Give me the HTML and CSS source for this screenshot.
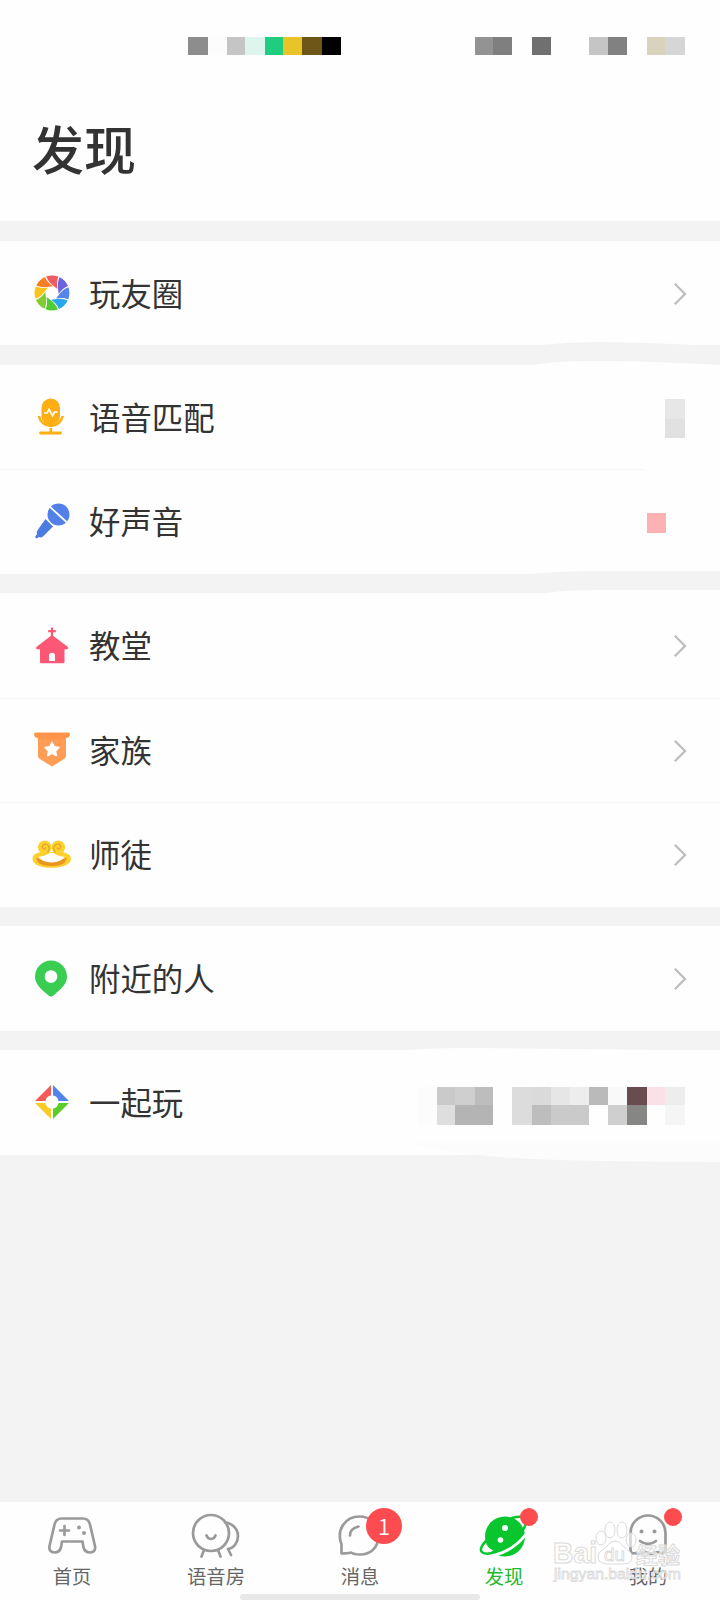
FILE: index.html
```html
<!DOCTYPE html>
<html lang="zh-CN">
<head>
<meta charset="utf-8">
<title>发现</title>
<link rel="stylesheet" href="styles.css">
</head>
<body>
<svg class="defs" aria-hidden="true">
  <symbol id="chevron" viewBox="0 0 14 24"><path d="M1.800 1.800 12 12 1.800 22.200" fill="none" stroke="#bebebe" stroke-width="2.300"/></symbol>
  <path id="blade" d="M-5.800-16.400Q.3-18.600 6.400-16.200 4-11 5.500-4L2.200-6.600Q-3.600-10.600-5.800-16.400Z"/>
</svg>
<div class="screen">
  <header class="header">
    <svg class="status" viewBox="0 0 720 20" shape-rendering="crispEdges">
      <path fill="#8d8d8d" d="M188 1h20v18h-20z"/><path fill="#fcfcfc" d="M208 1h19v18h-19z"/>
      <path fill="#c5c5c5" d="M227 1h18v18h-18z"/><path fill="#def5ed" d="M245 1h20v18h-20z"/>
      <path fill="#1fcd81" d="M265 1h18v18h-18z"/><path fill="#e8c428" d="M283 1h19v18h-19z"/>
      <path fill="#6e5518" d="M302 1h20v18h-20z"/><path d="M322 1h19v18h-19z"/>
      <path fill="#939393" d="M475 1h18v18h-18z"/><path fill="#7f7f7f" d="M493 1h19v18h-19z"/>
      <path fill="#707070" d="M532 1h19v18h-19z"/><path fill="#c5c5c5" d="M589 1h19v18h-19z"/>
      <path fill="#818181" d="M608 1h19v18h-19z"/><path fill="#d9d2bd" d="M647 1h18v18h-18z"/>
      <path fill="#d6d6d6" d="M665 1h20v18h-20z"/>
    </svg>
    <h1 class="title">发现</h1>
  </header>

  <main class="groups">
    <section class="group">
      <div class="row">
        <svg class="icon" viewBox="-20 -20 40 40">
          <use href="#blade" fill="#f15b5e"/><use href="#blade" fill="#6c63e0" transform="rotate(45)"/>
          <use href="#blade" fill="#5584ea" transform="rotate(90)"/><use href="#blade" fill="#2aa6ee" transform="rotate(135)"/>
          <use href="#blade" fill="#53cb35" transform="rotate(180)"/><use href="#blade" fill="#82cb30" transform="rotate(225)"/>
          <use href="#blade" fill="#f9c51b" transform="rotate(270)"/><use href="#blade" fill="#f67f25" transform="rotate(315)"/>
        </svg>
        <span class="label">玩友圈</span>
        <svg class="chevron"><use href="#chevron"/></svg>
      </div>
    </section>

    <section class="group">
      <div class="row">
        <svg class="icon" viewBox="0 0 40 40">
          <rect x="9.500" y="1.500" width="18.500" height="27" rx="9.200" fill="#ffae13"/>
          <path d="M12 16h3l2-3.500 3.500 6 2-3.500h3" fill="none" stroke="#fff" stroke-width="1.700"/>
          <path d="M7 19v.5a12 12 0 0 0 23.500 0V19M18.800 31v4" fill="none" stroke="#ffae13" stroke-width="2.500"/>
          <path d="M8.500 36h20" stroke="#ffae13" stroke-width="2.800" stroke-linecap="round"/>
        </svg>
        <span class="label">语音匹配</span>
        <svg class="mosaic-a" viewBox="0 0 20 40" shape-rendering="crispEdges"><path fill="#e7e7e7" d="M0 0h20v20H0z"/><path fill="#e1e1e1" d="M0 20h20v19H0z"/></svg>
      </div>
      <div class="row">
        <svg class="icon" viewBox="0 0 40 40">
          <circle cx="26.500" cy="13.500" r="11" fill="#5380e8"/>
          <path d="M17 5 34.500 21" stroke="#fff" stroke-width="1.700"/>
          <path d="m13.500 18 7.500 7.500-10 10q-2 1.500-4 .5L4.500 37.500 3 36l2-3q-.6-2.500 1-4.500Z" fill="#4c7ce1"/>
        </svg>
        <span class="label">好声音</span>
        <span class="mosaic-b"></span>
      </div>
    </section>

    <section class="group">
      <div class="row">
        <svg class="icon" viewBox="0 0 40 40">
          <path d="M20 2.500v10M16.200 6.200h7.600" stroke="#fc5876" stroke-width="2.200"/>
          <path d="M20 10 36 22q1 1.800-.8 2.200H32.500v13q0 1-1 1H9q-1 0-1-1v-13H5q-1.600-.3-.7-2.200Z" fill="#fc5876"/>
          <path d="M17 36v-5.200a3 3 0 0 1 6 0v5.200z" fill="#fff"/>
        </svg>
        <span class="label">教堂</span>
        <svg class="chevron"><use href="#chevron"/></svg>
      </div>
      <div class="row">
        <svg class="icon" viewBox="0 0 40 40">
          <path d="M6 5h28v21q0 1.700-1.500 2.800L20 36.500 7.500 28.800Q6 27.700 6 26z" fill="#ff9d57"/>
          <path d="M4 2.500h32q2 0 2 1.700Q38 7.500 34 8v1.500H6V8Q2 7.500 2 4.200q0-1.700 2-1.700Z" fill="#ff944b"/>
          <path d="m20 12.500 2.300 4.300 4.700.7-3.500 3.400.8 4.700-4.300-2.200-4.300 2.200.8-4.700-3.500-3.400 4.700-.7z" fill="#fff" stroke="#fff" stroke-width="1.500" stroke-linejoin="round"/>
        </svg>
        <span class="label">家族</span>
        <svg class="chevron"><use href="#chevron"/></svg>
      </div>
      <div class="row">
        <svg class="icon" viewBox="0 0 40 40">
          <path d="M7 18.500Q.5 20 .5 24.500C.5 31 9 33.800 19.500 33.800S39 31 39 24.500q0-4.500-7-6L24 16l-4.500 2.500L15 16Z" fill="#fbd02f"/>
          <path d="M4.500 23.500Q4.500 32 19.500 32t15-8.500Q29 27 19.500 27t-15-3.500Z" fill="#eb941f"/>
          <path d="M6.500 22.800Q14 22 17.500 19h4Q25 22 32.500 22.800 29 28.500 19.500 28.500T6.500 22.800Z" fill="#fff"/>
          <circle cx="12.700" cy="13.300" r="6.700" fill="#fbd02f"/><circle cx="26.300" cy="13.300" r="6.700" fill="#fbd02f"/>
          <path d="M15.500 18.300q3-4 .8-6.800-2.500-2.500-5.300-.5-1.500 2.300.5 4 2 .7 2.200-1.500M23.500 18.300q-3-4-.8-6.800 2.500-2.500 5.300-.5 1.500 2.300-.5 4-2 .7-2.200-1.500" fill="none" stroke="#e3a722" stroke-width="1.300"/>
        </svg>
        <span class="label">师徒</span>
        <svg class="chevron"><use href="#chevron"/></svg>
      </div>
    </section>

    <section class="group">
      <div class="row">
        <svg class="icon" viewBox="0 0 40 40">
          <path fill="#39ce52" fill-rule="evenodd" d="M19 2.500A16 16 0 0 1 35 18.500c0 7.500-5 11.500-13.500 19q-2.500 2-5 0C8 30 3 26 3 18.500A16 16 0 0 1 19 2.500Zm0 9.700a6.300 6.300 0 1 0 .01 0Z"/>
        </svg>
        <span class="label">附近的人</span>
        <svg class="chevron"><use href="#chevron"/></svg>
      </div>
    </section>

    <section class="group">
      <div class="row">
        <svg class="icon" viewBox="-20 -20 40 40">
          <path fill="#f35b58" d="M-1-17V-6.500A6.500 6.500 0 0 0-6.500-1H-17Z"/>
          <path fill="#5282eb" d="M1-17V-6.500A6.500 6.500 0 0 1 6.500-1H17Z"/>
          <path fill="#facb25" d="M-1 17V6.500A6.500 6.500 0 0 1-6.500 1H-17Z"/>
          <path fill="#5bcc29" d="M1 17V6.500A6.500 6.500 0 0 0 6.500 1H17Z"/>
        </svg>
        <span class="label">一起玩</span>
        <svg class="mosaic-c" viewBox="0 0 267 38" shape-rendering="crispEdges">
          <path fill="#fcfcfc" d="M0 0h19v38H0z"/>
          <path fill="#cacaca" d="M19 0h18v18H19z"/><path fill="#cfcfcf" d="M37 0h20v18H37z"/><path fill="#bdbdbd" d="M57 0h18v18H57z"/>
          <path fill="#dedede" d="M19 18h18v20H19z"/><path fill="#b4b4b4" d="M37 18h38v20H37z"/>
          <path fill="#dcdcdc" d="M94 0h20v38H94z"/><path fill="#dadada" d="M114 0h19v18h-19z"/><path fill="#e6e6e6" d="M133 0h19v18h-19z"/>
          <path fill="#ededed" d="M152 0h19v18h-19z"/><path fill="#bababa" d="M171 0h19v18h-19z"/><path fill="#f9f9f9" d="M190 0h19v18h-19z"/>
          <path fill="#694c50" d="M209 0h20v18h-20z"/><path fill="#fae0e7" d="M229 0h18v18h-18z"/><path fill="#ededed" d="M247 0h20v18h-20z"/>
          <path fill="#bdbdbd" d="M114 18h19v20h-19z"/><path fill="#cacaca" d="M133 18h38v20h-38z"/><path fill="#cfcfcf" d="M190 18h19v20h-19z"/>
          <path fill="#868784" d="M209 18h20v20h-20z"/><path fill="#f5f5f5" d="M247 18h20v20h-20z"/>
        </svg>
      </div>
    </section>
  </main>

  <svg class="smudges" viewBox="0 0 720 1600" aria-hidden="true">
    <path fill="#f3f3f3" d="M530 346Q570 342 600 342T720 346Z"/>
    <path fill="#fefefe" d="M535 365Q555 361 600 361T720 365Z"/>
    <path fill="#f3f3f3" d="M530 574Q560 571 600 571H720v3Z"/>
    <path fill="#fefefe" d="M540 594Q560 590 600 590H720v4Z"/>
    <path fill="#fefefe" d="M390 1052Q420 1048 470 1048T720 1051Z"/>
    <path fill="#fcfcfc" d="M410 1143H720V1162Q560 1162 500 1157T410 1143Z"/>
    <path fill="#fefefe" d="M645 466h75v6h-75z"/>
  </svg>

  <nav class="tabs">
    <a class="tab">
      <svg class="tab-icon" viewBox="0 0 50 50">
        <path d="M14.500 5.500H36q5.500 0 7 6l5 21.500q1 6-5 6.500-5 0-6.500-5l-1-6H15l-1 6q-1.500 5-6.500 5-6-.5-5-6.500L7.500 11.500q1.500-6 7-6Z"/>
        <path d="M13 17.500h9M17.500 13v9"/><circle class="dot" cx="32" cy="14.500" r="2"/><circle class="dot" cx="37" cy="20" r="2"/>
      </svg>
      <span>首页</span>
    </a>
    <a class="tab">
      <svg class="tab-icon" viewBox="0 0 50 50">
        <circle cx="20" cy="20" r="18"/><path d="M15.500 22.500q1.500 3.500 4.500 3.500t4.500-3.500M13 37l-2.500 6.500M27 37l2.500 6.500M34 9.500c5 0 13 5 13 13.500 0 6-4 12.500-10 13l3 6"/>
      </svg>
      <span>语音房</span>
    </a>
    <a class="tab">
      <svg class="tab-icon" viewBox="0 0 50 50">
        <path d="M6.500 40.500v-9C1 17 10 3.500 24.500 3.500c11 0 19 8 19 18.500 0 13-8 19.500-18.500 19.500q-6 0-9-2-3 1-9.500 1Z"/><path d="M15 22.500q0-7 8.500-9"/>
      </svg>
      <span>消息</span>
      <b class="badge">1</b>
    </a>
    <a class="tab active">
      <svg class="tab-icon" viewBox="0 0 50 50">
        <circle class="planet" cx="26" cy="23.500" r="20"/>
        <path class="planet-gap" d="M16 42C28 39 40 31 47 21"/>
        <path class="planet-ring" d="M7 28C1 34 1 38 3.500 39.500 9 43 22 38 31 31 40 25 49 12 46.500 6.500 45 3 39 3.500 33 5"/>
        <path class="planet-light" d="M6.500 30.500Q2.500 36 5 38.300 8 40 14.500 37.500 9 35 6.500 30.500Z"/>
        <circle class="planet-light" cx="26" cy="15" r="3"/><circle class="planet-light" cx="21.500" cy="27" r="2.800"/>
      </svg>
      <span>发现</span>
      <i class="red-dot"></i>
    </a>
    <a class="tab">
      <svg class="tab-icon" viewBox="0 0 50 50">
        <path d="M7.500 36V20a17.500 17.500 0 0 1 35 0v16q0 4.500-4.500 4-3-2-6 0-3.500 1.500-7 0-3-2-6 0-3.500 1.500-6.500 0-5 1.500-5-4Z"/>
        <path d="M17 28q8 6 16 0"/><circle class="dot" cx="18.500" cy="18.500" r="2"/><circle class="dot" cx="31.500" cy="18.500" r="2"/>
      </svg>
      <span>我的</span>
      <i class="red-dot"></i>
    </a>
    <svg class="watermark" viewBox="0 0 140 70" aria-hidden="true">
      <g class="wm-shape">
        <ellipse cx="51" cy="26" rx="5" ry="7"/><ellipse cx="60" cy="18" rx="5" ry="8"/><ellipse cx="72" cy="18" rx="5" ry="8"/><ellipse cx="81" cy="28" rx="5" ry="7"/>
        <path d="M65 29q5 0 8 5l8 7q4 10-7 11H57q-12-1-8-11l8-7q3-5 8-5Z"/>
      </g>
      <g class="wm-text">
        <text x="3" y="51" font-size="30" textLength="44" lengthAdjust="spacingAndGlyphs">Bai</text>
        <text class="wm-light" x="54" y="49" font-size="18" textLength="21" lengthAdjust="spacingAndGlyphs">du</text>
        <text x="86" y="51" font-size="22" textLength="44" lengthAdjust="spacingAndGlyphs">经验</text>
        <text class="wm-light" x="4" y="67" font-size="15" textLength="127" lengthAdjust="spacingAndGlyphs">jingyan.baidu.com</text>
      </g>
    </svg>
    <i class="home-bar"></i>
  </nav>
</div>
</body>
</html>
```
FILE: styles.css
```css
* { box-sizing: border-box; }
body { margin: 0; background: #f3f3f3; font-family: "Noto Sans CJK SC", sans-serif; color: #333; }
.defs { position: absolute; width: 0; height: 0; }
.screen { position: relative; display: flex; flex-direction: column; width: 720px; height: 1600px; overflow: hidden; }
.header { height: 221px; padding-top: 36px; background: #fefefe; }
.status { display: block; width: 720px; height: 20px; }
.title { margin: 54px 0 0 32px; font-size: 52px; font-weight: 500; line-height: 76px; }
.groups { display: flex; flex-direction: column; gap: 19.500px; padding-top: 19.500px; flex: 1; }
.group { background: #fefefe; }
.row { display: flex; align-items: center; height: 104.500px; padding: 0 33px 0 32px; }
.row + .row { box-shadow: inset 0 1px #f7f7f7; }
.icon { width: 40px; height: 40px; flex: none; }
.label { flex: 1; margin: 0 0 0 17px; font-size: 31.400px; font-weight: 400; line-height: 44px; }
.chevron { width: 14px; height: 24px; margin-top: 2px; }
.mosaic-a { width: 20px; height: 40px; margin: 4px 2px 0 0; }
.mosaic-b { width: 19px; height: 20px; margin: 3px 21px 0 0; background: #fcb1b3; }
.mosaic-c { width: 267px; height: 38px; margin: 7px 2px 0 0; }
.smudges { position: absolute; inset: 0; width: 720px; height: 1600px; pointer-events: none; }
.tabs { position: relative; display: flex; height: 98px; background: #fefefe; }
.tab { position: relative; flex: 1; display: flex; flex-direction: column; align-items: center; padding-top: 11px; color: #666; font-size: 19.300px; line-height: 26px; }
.tab-icon { width: 50px; height: 50px; fill: none; stroke: #999b99; stroke-width: 2.700; stroke-linecap: round; stroke-linejoin: round; }
.tab-icon .dot { fill: #999b99; stroke: none; }
.tab-icon .planet { fill: #09c62e; stroke: none; }
.tab-icon .planet-gap { stroke: #fefefe; stroke-width: 3; }
.tab-icon .planet-ring { stroke: #09c62e; stroke-width: 2.500; }
.tab-icon .planet-light { fill: #fefefe; stroke: none; }
.active { color: #20b82d; }
.badge { position: absolute; left: 78px; top: 6px; width: 36px; height: 36px; border-radius: 50%; background: #fd4c4f; color: #fff; font-size: 22px; font-weight: 350; line-height: 35px; text-align: center; }
.red-dot { position: absolute; left: 88px; top: 6px; width: 18px; height: 18px; border-radius: 50%; background: #fd4c4f; }
.watermark { position: absolute; left: 550px; top: 10px; width: 140px; height: 70px; }
.wm-shape, .wm-text { fill: #fff; fill-opacity: .6; stroke: #dadada; stroke-width: 1; }
.wm-text { font-family: "Liberation Sans", "Noto Sans CJK SC", sans-serif; font-weight: 700; }
.wm-light { font-weight: 400; stroke-width: .8; }
.home-bar { position: absolute; left: 240px; bottom: 0; width: 240px; height: 6px; border-radius: 3px; background: #e8e8e8; }
```
